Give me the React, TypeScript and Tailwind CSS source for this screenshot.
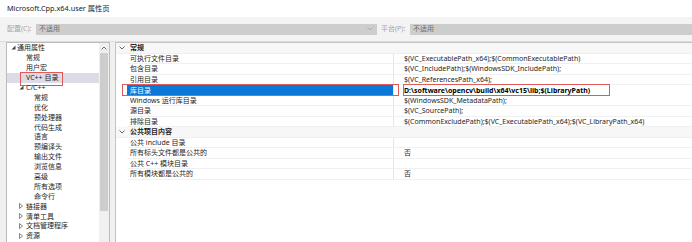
const font = { fontFamily: '"Noto Sans", "Noto Sans CJK SC", sans-serif' };

type TreeItem = { label: string; indent: number; mark?: 'open' | 'closed'; selected?: boolean };

const tree: TreeItem[] = [
  { label: '通用属性', indent: 10, mark: 'open' },
  { label: '常规', indent: 19 },
  { label: '用户宏', indent: 19 },
  { label: 'VC++ 目录', indent: 19, selected: true },
  { label: 'C/C++', indent: 19, mark: 'open' },
  { label: '常规', indent: 27 },
  { label: '优化', indent: 27 },
  { label: '预处理器', indent: 27 },
  { label: '代码生成', indent: 27 },
  { label: '语言', indent: 27 },
  { label: '预编译头', indent: 27 },
  { label: '输出文件', indent: 27 },
  { label: '浏览信息', indent: 27 },
  { label: '高级', indent: 27 },
  { label: '所有选项', indent: 27 },
  { label: '命令行', indent: 27 },
  { label: '链接器', indent: 19, mark: 'closed' },
  { label: '清单工具', indent: 19, mark: 'closed' },
  { label: '文档管理程序', indent: 19, mark: 'closed' },
  { label: '资源', indent: 19, mark: 'closed' },
];

type Row = { name: string; value?: string; category?: boolean; selected?: boolean };

const rows: Row[] = [
  { name: '常规', category: true },
  { name: '可执行文件目录', value: '$(VC_ExecutablePath_x64);$(CommonExecutablePath)' },
  { name: '包含目录', value: '$(VC_IncludePath);$(WindowsSDK_IncludePath);' },
  { name: '引用目录', value: '$(VC_ReferencesPath_x64);' },
  { name: '库目录', value: 'D:\\software\\opencv\\build\\x64\\vc15\\lib;$(LibraryPath)', selected: true },
  { name: 'Windows 运行库目录', value: '$(WindowsSDK_MetadataPath);' },
  { name: '源目录', value: '$(VC_SourcePath);' },
  { name: '排除目录', value: '$(CommonExcludePath);$(VC_ExecutablePath_x64);$(VC_LibraryPath_x64)' },
  { name: '公共项目内容', category: true },
  { name: '公共 include 目录', value: '' },
  { name: '所有标头文件都是公共的', value: '否' },
  { name: '公共 C++ 模块目录', value: '' },
  { name: '所有模块都是公共的', value: '否' },
];

function Chevron({ className }: { className?: string }) {
  return (
    <svg width="6" height="4" viewBox="0 0 6 4" className={className}>
      <polyline points="0.5,0.5 3,3 5.5,0.5" fill="none" stroke="currentColor" strokeWidth="0.9" />
    </svg>
  );
}

function TreeMark({ kind }: { kind: 'open' | 'closed' }) {
  if (kind === 'open') {
    return (
      <svg width="5" height="5" viewBox="0 0 5 5" className="text-[#444]">
        <polygon points="4.5,0.5 4.5,4.5 0.5,4.5" fill="currentColor" />
      </svg>
    );
  }
  return (
    <svg width="4" height="6" viewBox="0 0 4 6" className="text-[#666]">
      <polygon points="0.5,0.5 3.5,3 0.5,5.5" fill="none" stroke="currentColor" strokeWidth="0.8" />
    </svg>
  );
}

export default function App() {
  return (
    <div className="w-[692px] h-[242px] bg-white overflow-hidden flex flex-col text-[7px] text-[#1e1e1e]" style={font}>
      <div className="h-[17px] px-[7px] flex items-center text-[7.3px] text-[#222] bg-white">
        Microsoft.Cpp.x64.user 属性页
      </div>

      <div className="h-[25px] bg-[#f3f3f3] border-b border-[#dcdcdc] flex items-center pl-[7px]">
        <span className="w-[29px] text-[#a6a6a6]">配置(C):</span>
        <div className="w-[341px] h-[11px] bg-[#cdcdcd] flex items-center justify-between pl-[3px] pr-[4px] text-[#6f6f6f]">
          <span>不适用</span>
          <Chevron className="text-[#a8a8a8]" />
        </div>
        <span className="ml-[4px] w-[29px] text-[#a6a6a6]">平台(P):</span>
        <div className="w-[282px] h-[11px] bg-[#cdcdcd] flex items-center pl-[3px] text-[#6f6f6f]">
          <span>不适用</span>
        </div>
      </div>

      <div className="flex-1 flex bg-[#f0f0f0] pl-[6px] gap-[5px] min-h-0">
        <div className="w-[104px] border-l border-t border-r border-[#bcbcbc] bg-white flex">
          <div className="flex-1 flex flex-col">
            {tree.map((t, i) => (
              <div
                key={i}
                className={`relative h-[9.9px] shrink-0 flex items-center ${t.selected ? 'bg-[#dcdce6]' : ''}`}
              >
                {t.mark && (
                  <span
                    className={`absolute flex items-center ${t.mark === 'open' && t.indent === 10 ? 'left-[4px]' : 'left-[12px]'}`}
                  >
                    <TreeMark kind={t.mark} />
                  </span>
                )}
                <span style={{ paddingLeft: t.indent }} className="whitespace-nowrap leading-none">
                  {t.label}
                </span>
                {t.selected && (
                  <span className="absolute left-[13px] top-[-1px] w-[43px] h-[14px] border border-[#e05a5a]" />
                )}
              </div>
            ))}
          </div>
          <div className="w-[10px] bg-[#f0f0f0] flex flex-col items-center">
            <div className="h-[10px] flex items-center justify-center">
              <Chevron className="rotate-180 text-[#606060]" />
            </div>
            <div className="w-[8px] h-[158px] bg-[#cdcdcd]" />
          </div>
        </div>

        <div className="flex-1 border-l border-t border-[#c4c4c4] bg-white flex flex-col">
          {rows.map((r, i) =>
            r.category ? (
              <div key={i} className="h-[10.5px] shrink-0 flex items-center bg-[#f7f7f7] border-b border-[#efefef]">
                <span className="w-[11px] flex justify-center">
                  <Chevron className="text-[#555]" />
                </span>
                <span className="pl-[3px] font-bold leading-none">{r.name}</span>
              </div>
            ) : (
              <div key={i} className="relative h-[10.5px] shrink-0 flex">
                <div className="w-[11px]" />
                <div
                  className={`w-[267px] flex items-center pl-[3px] border-r border-[#e6e6e6] ${
                    r.selected ? 'bg-[#0a78d7] text-white' : 'border-b border-b-[#f0f0f0]'
                  }`}
                >
                  <span className="leading-none whitespace-nowrap">{r.name}</span>
                </div>
                <div
                  className={`flex-1 flex items-center pl-[10px] ${r.selected ? 'font-bold text-black' : 'border-b border-[#f0f0f0]'}`}
                >
                  <span className="leading-none whitespace-nowrap">{r.value}</span>
                </div>
                {r.selected && (
                  <>
                    <span className="absolute left-[6px] top-[-1px] w-[277px] h-[12px] border border-[#e05a5a]" />
                    <span className="absolute left-[287px] top-[-1px] w-[207px] h-[12px] border border-[#e05a5a]" />
                  </>
                )}
              </div>
            ),
          )}
        </div>
      </div>
    </div>
  );
}
